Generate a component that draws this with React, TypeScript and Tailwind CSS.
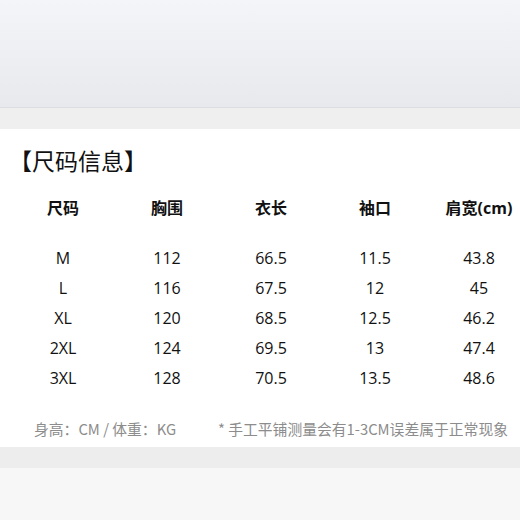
import React from "react";

const headers = ["尺码", "胸围", "衣长", "袖口", "肩宽(cm)"];
const rows = [
  ["M", "112", "66.5", "11.5", "43.8"],
  ["L", "116", "67.5", "12", "45"],
  ["XL", "120", "68.5", "12.5", "46.2"],
  ["2XL", "124", "69.5", "13", "47.4"],
  ["3XL", "128", "70.5", "13.5", "48.6"],
];

const cjk = "font-['Noto_Sans_CJK_SC',sans-serif]";
const num = "font-['Open_Sans','Noto_Sans_CJK_SC',sans-serif]";

export default function App() {
  return (
    <div className="w-[520px] h-[520px] overflow-hidden bg-white">
      <div className="h-[108px] bg-gradient-to-b from-[#f4f5f8] to-[#e8e9ed] border-b border-[#dcdde0]" />
      <div className="h-[21px] bg-[#efefef]" />
      <div className="h-[318px] bg-white overflow-hidden">
        <div className={`pt-[16px] pl-[9px] text-[23px] leading-[30px] text-[#111] ${cjk}`}>
          【尺码信息】
        </div>
        <div className="pl-[11px] pt-[21px]">
          <div className={`flex w-[540px] h-[24px] items-center text-[16px] font-bold text-[#111] ${num}`}>
            {headers.map((h) => (
              <div key={h} className="w-[104px] shrink-0 text-center">
                {h}
              </div>
            ))}
          </div>
          <div className="pt-[23px]">
            {rows.map((r) => (
              <div key={r[0]} className={`flex w-[540px] h-[30px] items-center text-[16px] text-[#111] ${num}`}>
                {r.map((c, i) => (
                  <div key={i} className="w-[104px] shrink-0 text-center">
                    {c}
                  </div>
                ))}
              </div>
            ))}
          </div>
        </div>
        <div className={`flex mt-[25px] text-[14.8px] leading-[22px] text-[#8c8c8c] ${cjk}`}>
          <div className="pl-[34px] w-[218px]">身高：CM / 体重：KG</div>
          <div>* 手工平铺测量会有1-3CM误差属于正常现象</div>
        </div>
      </div>
      <div className="h-[21px] bg-[#ededed]" />
      <div className="h-[52px] bg-[#f7f7f7]" />
    </div>
  );
}
